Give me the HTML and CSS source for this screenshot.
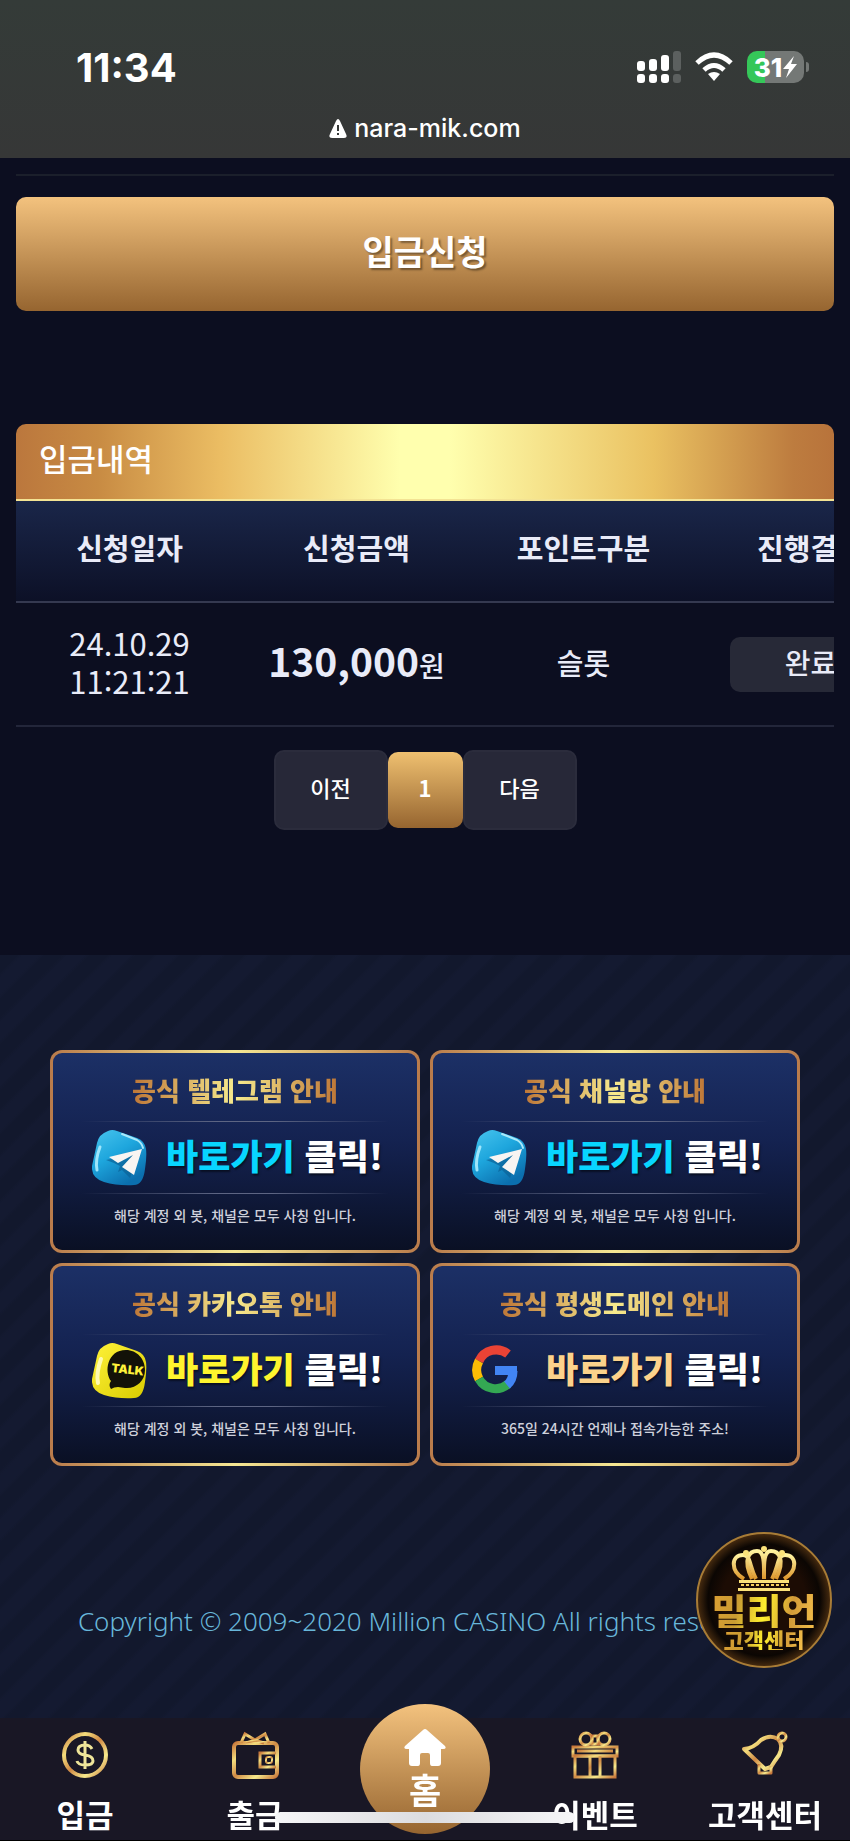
FILE: index.html
```html
<!DOCTYPE html>
<html lang="ko">
<head>
    <meta charset="UTF-8">
    <meta name="viewport" content="width=device-width, initial-scale=1.0">
    <title>입금신청</title>
    <link rel="stylesheet" href="styles.css">
</head>
<body>
    <!-- shared gradients for the icons -->
    <svg class="defs" width="0" height="0" aria-hidden="true">
        <defs>
            <linearGradient id="gold" x1="0" y1="0" x2="1" y2="1">
                <stop offset="0" stop-color="#c9793c"/>
                <stop offset="0.25" stop-color="#f3dc7c"/>
                <stop offset="0.5" stop-color="#d08a45"/>
                <stop offset="0.75" stop-color="#f6e98c"/>
                <stop offset="1" stop-color="#c9793c"/>
            </linearGradient>
            <linearGradient id="sky" x1="0" y1="0" x2="0.6" y2="1">
                <stop offset="0" stop-color="#49c5ee"/>
                <stop offset="0.5" stop-color="#1ea6dd"/>
                <stop offset="1" stop-color="#0b6fae"/>
            </linearGradient>
            <linearGradient id="lemon" x1="0" y1="0" x2="1" y2="1">
                <stop offset="0" stop-color="#fff23a"/>
                <stop offset="1" stop-color="#d9cc00"/>
            </linearGradient>
            <linearGradient id="crown" x1="0" y1="0" x2="0" y2="1">
                <stop offset="0" stop-color="#fff3a0"/>
                <stop offset="1" stop-color="#dd962c"/>
            </linearGradient>
            <symbol id="telegram" viewBox="0 0 56 56">
                <path d="M16 1Q20-1 25 1L45 8Q53 11 54 19Q55 26 53 39Q51 55 42 55Q26 56 12 52Q-1 48 0 36L5 13Q7 4 16 1Z" fill="url(#sky)"/>
                <path d="M8 17Q3 30 5 40" fill="none" stroke="#9fe6fb" stroke-width="3" stroke-linecap="round"/>
                <path d="M30 4L45 10Q50 13 51 18" fill="none" stroke="#a8e8fa" stroke-width="2" stroke-linecap="round"/>
                <path d="M14 30L47 23L38 48L30 40L26 42L28 36L22 33Z" fill="#0c6297" opacity="0.7"/>
                <path d="M17 27L50 19L42 45L30 37L41 25L26 33Z" fill="#f8f5f2"/>
            </symbol>
        </defs>
    </svg>

    <header class="status">
        <div class="status-row">
            <span class="clock">11:34</span>
            <div class="status-icons">
                <svg width="44" height="32" viewBox="0 0 44 32" aria-hidden="true">
                    <g fill="#fff">
                        <rect x="0" y="10" width="8" height="10" rx="3"/>
                        <rect x="12" y="8" width="8" height="12" rx="3"/>
                        <rect x="24" y="4" width="8" height="16" rx="3"/>
                        <rect x="0" y="23" width="8" height="9" rx="3"/>
                        <rect x="12" y="23" width="8" height="9" rx="3"/>
                        <rect x="24" y="23" width="8" height="9" rx="3"/>
                    </g>
                    <g fill="#5c605f">
                        <rect x="36" y="0" width="8" height="20" rx="3"/>
                        <rect x="36" y="23" width="8" height="9" rx="3"/>
                    </g>
                </svg>
                <svg width="38" height="30" viewBox="0 0 38 30" aria-hidden="true">
                    <g fill="none" stroke="#fff" stroke-width="5">
                        <path d="M2 11Q19-5 36 11"/>
                        <path d="M9 18Q19 9 29 18"/>
                    </g>
                    <path d="M13 22Q19 18 25 22L19 29Z" fill="#fff"/>
                </svg>
                <span class="battery">
                    <span>31</span>
                    <svg width="14" height="24" viewBox="0 0 14 24" aria-hidden="true"><path d="M11 1L0 14H6L3 23L14 9H8Z" fill="#fff"/></svg>
                </span>
            </div>
        </div>
        <div class="address">
            <svg width="18" height="19" viewBox="0 0 18 19" aria-hidden="true">
                <path d="M9 0Q10 0 11 2L17 15Q19 19 15 19H3Q-1 19 1 15L7 2Q8 0 9 0Z" fill="#fff"/>
                <path d="M9 6V12M9 14V16" stroke="#353837" stroke-width="2"/>
            </svg>
            <span>nara-mik.com</span>
        </div>
    </header>

    <main class="content">
        <hr class="divider">
        <button type="button" class="submit-button">입금신청</button>

        <section class="history">
            <h2>입금내역</h2>
            <div class="table-scroll">
                <table>
                    <thead>
                        <tr>
                            <th>신청일자</th>
                            <th>신청금액</th>
                            <th>포인트구분</th>
                            <th>진행결과</th>
                        </tr>
                    </thead>
                    <tbody>
                        <tr>
                            <td class="date">24.10.29<br>11:21:21</td>
                            <td class="amount"><strong>130,000</strong>원</td>
                            <td>슬롯</td>
                            <td class="result"><span class="state">완료</span></td>
                        </tr>
                    </tbody>
                </table>
            </div>
        </section>

        <nav class="pagination" aria-label="페이지">
            <button type="button">이전</button>
            <button type="button" class="current">1</button>
            <button type="button">다음</button>
        </nav>
    </main>

    <footer class="footer">
        <div class="banners">
            <a href="#" class="banner">
                <span class="banner-title">공식 텔레그램 안내</span>
                <span class="banner-main">
                    <svg width="56" height="56" aria-hidden="true"><use href="#telegram"/></svg>
                    <span class="go blue">바로가기 <b>클릭!</b></span>
                </span>
                <span class="banner-note">해당 계정 외 봇, 채널은 모두 사칭 입니다.</span>
            </a>
            <a href="#" class="banner">
                <span class="banner-title">공식 채널방 안내</span>
                <span class="banner-main">
                    <svg width="56" height="56" aria-hidden="true"><use href="#telegram"/></svg>
                    <span class="go blue">바로가기 <b>클릭!</b></span>
                </span>
                <span class="banner-note">해당 계정 외 봇, 채널은 모두 사칭 입니다.</span>
            </a>
            <a href="#" class="banner">
                <span class="banner-title">공식 카카오톡 안내</span>
                <span class="banner-main">
                    <svg width="56" height="56" viewBox="0 0 56 56" aria-hidden="true">
                        <path d="M16 1Q20-1 25 1L45 8Q53 11 54 19Q55 26 53 39Q51 55 42 55Q26 56 12 52Q-1 48 0 36L5 13Q7 4 16 1Z" fill="url(#lemon)"/>
                        <path d="M9 16Q4 30 6 40" fill="none" stroke="#fffbb0" stroke-width="4" stroke-linecap="round"/>
                        <path d="M34 7C45 7 53 16 53 27C53 38 44 46 33 45L26 44Q22 44 19 46Q16 42 19 38C12 29 15 7 34 7Z" fill="#131208"/>
                        <text x="19" y="29" class="talk" transform="rotate(6 19 29)">TALK</text>
                    </svg>
                    <span class="go yellow">바로가기 <b>클릭!</b></span>
                </span>
                <span class="banner-note">해당 계정 외 봇, 채널은 모두 사칭 입니다.</span>
            </a>
            <a href="#" class="banner">
                <span class="banner-title">공식 평생도메인 안내</span>
                <span class="banner-main">
                    <svg width="56" height="56" viewBox="0 0 56 56" aria-hidden="true">
                        <g fill="none" stroke-width="9">
                            <path d="M36 11A19 19 0 0 0 7 18" stroke="#ea4335"/>
                            <path d="M7 18A19 19 0 0 0 7 36" stroke="#fbbc05"/>
                            <path d="M7 36A19 19 0 0 0 36 41" stroke="#34a853"/>
                            <path d="M35 42Q41 37 41 28" stroke="#4285f4"/>
                        </g>
                        <path d="M23 23H45V32H23Z" fill="#4285f4"/>
                    </svg>
                    <span class="go peach">바로가기 <b>클릭!</b></span>
                </span>
                <span class="banner-note">365일 24시간 언제나 접속가능한 주소!</span>
            </a>
        </div>
        <p class="copyright">Copyright © 2009~2020 Million CASINO All rights reserved.</p>
    </footer>

    <a href="#" class="support">
        <svg width="66" height="46" viewBox="0 0 66 46" aria-hidden="true">
            <g fill="none" stroke="url(#crown)" stroke-width="4">
                <path d="M13 33C-1 25 0 9 12 9C20 9 18 20 25 33"/>
                <path d="M21 33C11 12 19 5 26 5C34 5 33 20 33 33"/>
                <path d="M53 33C67 25 66 9 54 9C46 9 48 20 41 33"/>
                <path d="M45 33C55 12 47 5 40 5C32 5 33 20 33 33"/>
            </g>
            <g fill="#fbe27a">
                <circle cx="33" cy="3" r="3"/>
                <circle cx="15" cy="7" r="3"/>
                <circle cx="51" cy="7" r="3"/>
                <path d="M8 34H58V37H8Z"/>
                <path d="M7 42H59V45H7Z"/>
            </g>
            <path d="M10 39H57" stroke="#f4cf5c" stroke-width="2" stroke-dasharray="3 2"/>
        </svg>
        <span class="support-name">밀리언</span>
        <span class="support-label">고객센터</span>
    </a>

    <nav class="tabbar">
        <a href="#">
            <svg width="48" height="48" viewBox="0 0 48 48" aria-hidden="true">
                <g fill="none" stroke="url(#gold)" stroke-width="4">
                    <circle cx="24" cy="24" r="21"/>
                    <path d="M31 18Q29 14 24 14Q17 14 17 19Q17 23 24 24Q32 25 32 30Q32 34 24 34Q17 34 16 30M24 10V38" stroke="#efe59a" stroke-width="3"/>
                </g>
            </svg>
            <span>입금</span>
        </a>
        <a href="#">
            <svg width="48" height="48" viewBox="0 0 48 48" aria-hidden="true">
                <g fill="none" stroke="url(#gold)" stroke-width="4">
                    <rect x="3" y="12" width="43" height="34" rx="4"/>
                    <path d="M45 22H29V36H45" stroke-width="3"/>
                    <rect x="35" y="26" width="6" height="6" rx="2" stroke-width="2"/>
                    <path d="M10 12L14 3L24 9L34 3L38 12" stroke-width="3"/>
                    <path d="M15 12L24 9L33 12" stroke-width="3"/>
                </g>
            </svg>
            <span>출금</span>
        </a>
        <a href="#" class="home">
            <svg width="42" height="37" viewBox="0 0 42 37" aria-hidden="true">
                <path d="M19 1Q21-1 23 1L41 17Q43 20 39 20H37V34Q37 37 34 37H28Q26 37 26 34V26Q26 24 24 24H18Q16 24 16 26V34Q16 37 14 37H8Q5 37 5 34V20H3Q-1 20 1 17Z" fill="#fff"/>
            </svg>
            <span>홈</span>
        </a>
        <a href="#">
            <svg width="48" height="48" viewBox="0 0 48 48" aria-hidden="true">
                <g fill="none" stroke="url(#gold)" stroke-width="3">
                    <rect x="2" y="16" width="44" height="9"/>
                    <rect x="4" y="25" width="40" height="21"/>
                    <path d="M19 25V46M29 25V46M6 20H42"/>
                    <ellipse cx="15" cy="8" rx="6" ry="6"/>
                    <ellipse cx="33" cy="8" rx="6" ry="6"/>
                    <path d="M21 5H27V13H21Z"/>
                </g>
            </svg>
            <span>이벤트</span>
        </a>
        <a href="#">
            <svg width="48" height="48" viewBox="0 0 48 48" aria-hidden="true">
                <g fill="none" stroke="url(#gold)" stroke-width="4" stroke-linejoin="round">
                    <path d="M3 18Q13 17 20 9Q29 3 37 8Q43 14 38 24Q33 31 30 36L24 38Z"/>
                    <circle cx="41" cy="6" r="4" stroke-width="3"/>
                    <path d="M18 33V42H30V35" stroke-width="3"/>
                </g>
            </svg>
            <span>고객센터</span>
        </a>
        <div class="home-indicator"></div>
    </nav>
</body>
</html>
```

FILE: styles.css
```css
* {
    box-sizing: border-box;
}
body {
    margin: 0;
    background-color: #0c0e20;
    color: #e9ebf8;
    font-family: "Noto Sans CJK KR", sans-serif;
    overflow-x: hidden;
}
a {
    text-decoration: none;
}
button {
    font-family: inherit;
    border: none;
    color: #fff;
    cursor: pointer;
}
.defs {
    position: absolute;
}

/* status bar */
.status {
    height: 158px;
    padding-top: 42px;
    background: linear-gradient(#343b38, #363737);
    color: #fff;
    font-family: Inter, sans-serif;
}
.status-row {
    display: flex;
    justify-content: space-between;
    align-items: center;
    height: 50px;
    padding: 0 46px 0 76px;
}
.clock {
    font-size: 40px;
    font-weight: 700;
}
.status-icons {
    display: flex;
    align-items: center;
    gap: 14px;
}
.battery {
    position: relative;
    display: flex;
    align-items: center;
    justify-content: center;
    gap: 1px;
    width: 57px;
    height: 32px;
    border-radius: 10px;
    background: linear-gradient(90deg, #35c759 31%, #747876 31%);
    font-size: 26px;
    font-weight: 800;
}
.battery::after {
    content: "";
    position: absolute;
    right: -5px;
    top: 11px;
    width: 3px;
    height: 10px;
    border-radius: 0 3px 3px 0;
    background-color: #747876;
}
.address {
    display: flex;
    justify-content: center;
    align-items: center;
    gap: 7px;
    height: 72px;
    font-size: 25px;
    font-weight: 500;
}

/* deposit */
.content {
    padding: 16px 16px 125px;
}
.divider {
    height: 2px;
    margin: 0;
    border: none;
    background-color: #1b1f2b;
}
.submit-button {
    display: block;
    width: 100%;
    height: 114px;
    margin-top: 21px;
    padding-bottom: 8px;
    border-radius: 10px;
    background: linear-gradient(#f3c27e, #966530);
    font-size: 34px;
    font-weight: 700;
    text-shadow: 2px 2px 2px rgba(0, 0, 0, 0.4);
}
.history {
    margin-top: 113px;
}
.history h2 {
    height: 77px;
    margin: 0;
    padding-left: 23px;
    border-bottom: 2px solid #f3e394;
    border-radius: 10px 10px 0 0;
    background: linear-gradient(90deg, #bb773d, #c88b43 10%, #ebbd63 25%, #ffffae 47%, #ffffae 53%, #eac161 78%, #bd7c3f 95%, #b8733b);
    color: #fff;
    font-size: 31px;
    font-weight: 500;
    line-height: 68px;
}
.table-scroll {
    overflow-x: auto;
    scrollbar-width: none;
}
table {
    width: 111%;
    border-spacing: 0;
    table-layout: fixed;
    text-align: center;
}
th, td {
    padding: 0;
}
thead {
    background: linear-gradient(#1a2649, #0c1026);
}
th {
    height: 102px;
    padding-bottom: 8px;
    border-bottom: 2px solid #353950;
    font-size: 29px;
    font-weight: 700;
}
td {
    height: 124px;
    padding-bottom: 4px;
    border-bottom: 2px solid #23263a;
    font-size: 29px;
    font-weight: 500;
}
.date {
    font-size: 31px;
    font-weight: 400;
    line-height: 38px;
}
.amount {
    padding-bottom: 8px;
    font-size: 28px;
}
.amount strong {
    font-size: 39px;
}
.result {
    padding-bottom: 0;
}
.state {
    display: block;
    width: 160px;
    height: 55px;
    margin: 0 auto;
    border-radius: 10px;
    background-color: #272937;
    font-size: 28px;
    line-height: 51px;
}
.pagination {
    display: flex;
    justify-content: center;
    align-items: center;
    margin-top: 23px;
}
.pagination button {
    width: 114px;
    height: 80px;
    padding: 0 0 6px;
    border: 2px solid #2b2c3c;
    border-radius: 10px;
    background-color: #272838;
    font-size: 22px;
    font-weight: 500;
}
.pagination .current {
    width: 75px;
    height: 76px;
    border: none;
    background: linear-gradient(#efc070, #966530);
    font-weight: 700;
}

/* footer */
.footer {
    padding: 95px 50px 199px;
    background: repeating-linear-gradient(135deg, #12182d 0, #12182d 12px, #141a31 16px, #141a31 28px, #12182d 32px);
}
.banners {
    display: grid;
    grid-template-columns: 1fr 1fr;
    gap: 10px;
}
.banner {
    display: flex;
    flex-direction: column;
    align-items: center;
    height: 203px;
    padding-top: 18px;
    border: 3px solid transparent;
    border-radius: 12px;
    background: linear-gradient(#1c3066, #142250 45%, #0a1024) padding-box,
        linear-gradient(90deg, #b97b4b, #f5e793 50%, #b97b4b) border-box;
}
.banner-title {
    background: linear-gradient(90deg, #bd7637, #f7ea8d 50%, #bd7637);
    -webkit-background-clip: text;
    background-clip: text;
    color: transparent;
    font-size: 26px;
    font-weight: 900;
    line-height: 38px;
}
.banner-main {
    display: flex;
    align-items: center;
    gap: 18px;
    width: 100%;
    height: 73px;
    margin-top: 12px;
    padding-left: 39px;
    border: solid transparent;
    border-width: 1px 0;
    border-image: linear-gradient(90deg, transparent 8%, #5d6583 45%, #5d6583 60%, transparent 92%) 1;
}
.go {
    padding-bottom: 6px;
    font-size: 35px;
    font-weight: 900;
    line-height: 44px;
    white-space: nowrap;
    text-shadow: 1px 2px 2px rgba(0, 0, 0, 0.5);
}
.go b {
    color: #fff;
    font-weight: 900;
}
.blue {
    color: #08d5ff;
}
.yellow {
    color: #fff52e;
}
.peach {
    color: #fcd28b;
}
.talk {
    fill: #fff23a;
    font-family: Inter, sans-serif;
    font-size: 12px;
    font-weight: 900;
}
.banner-note {
    margin-top: 7px;
    color: #cfd1dc;
    font-size: 14px;
    font-weight: 500;
    line-height: 28px;
}
.copyright {
    margin: 135px 0 0;
    color: #68b7da;
    font-family: "Noto Sans", sans-serif;
    font-size: 26px;
    font-weight: 300;
    line-height: 40px;
    text-align: center;
    white-space: nowrap;
}

/* floating customer center link */
.support {
    position: fixed;
    right: 18px;
    bottom: 173px;
    display: flex;
    flex-direction: column;
    align-items: center;
    width: 136px;
    height: 136px;
    padding-top: 12px;
    border: 2px solid #a87c36;
    border-radius: 50%;
    background: radial-gradient(circle, #1c0c04 45%, #0b0603 60%, #4a2d10 72%);
}
.support-name, .support-label {
    background: linear-gradient(100deg, #dc9f33, #c99b32 25%, #fff02e 50%, #d29a38 75%, #f6c14c);
    -webkit-background-clip: text;
    background-clip: text;
    color: transparent;
    font-size: 38px;
    font-weight: 900;
    line-height: 36px;
}
.support-label {
    font-size: 22px;
    line-height: 22px;
}

/* bottom menu */
.tabbar {
    position: fixed;
    left: 0;
    right: 0;
    bottom: 0;
    display: flex;
    height: 123px;
    border-bottom: 1px solid #000;
    background-color: #191725;
}
.tabbar a {
    flex: 1;
    display: flex;
    flex-direction: column;
    align-items: center;
    gap: 14px;
    padding-top: 13px;
    color: #fff;
    font-size: 31px;
    font-weight: 700;
    line-height: 42px;
    white-space: nowrap;
}
.tabbar .home {
    flex: none;
    gap: 0;
    width: 130px;
    height: 130px;
    margin: -14px 20px 0;
    padding-top: 25px;
    border-radius: 50%;
    background: linear-gradient(#f3c27e, #966530);
    font-size: 35px;
    line-height: 46px;
}
.home-indicator {
    position: absolute;
    left: 50%;
    bottom: 17px;
    width: 300px;
    height: 11px;
    margin-left: -150px;
    border-radius: 6px;
    background: linear-gradient(90deg, #f6f6f8, #dcdcdf 50%, #f6f6f8);
}
```
